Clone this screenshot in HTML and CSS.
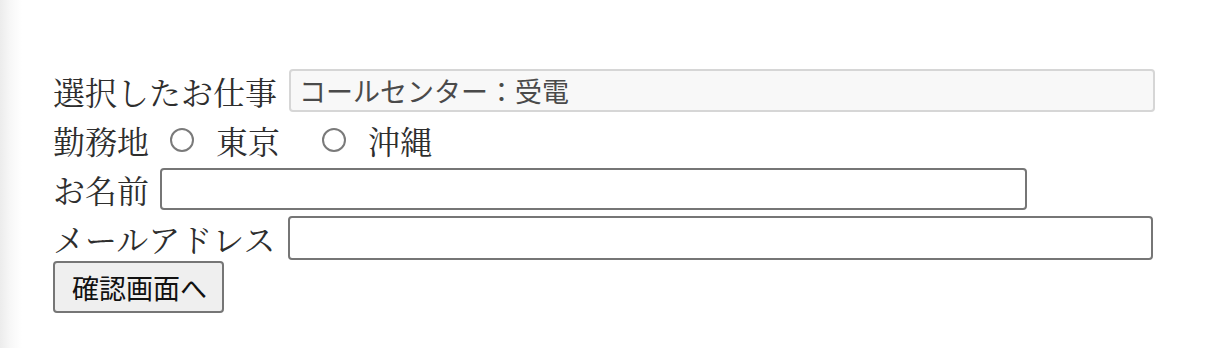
FILE: index.html
```html
<!DOCTYPE html>
<html lang="ja">
<head>
<meta charset="utf-8">
<link rel="stylesheet" href="styles.css">
</head>
<body>
<form class="form">
  <div class="row">
    <label class="label">選択したお仕事</label>
    <input class="field field-readonly field-wide" type="text" value="コールセンター：受電" readonly>
  </div>
  <div class="row">
    <span class="label">勤務地</span>
    <label class="choice"><input class="radio" type="radio" name="place"><span class="label">東京</span></label>
    <label class="choice"><input class="radio" type="radio" name="place"><span class="label">沖縄</span></label>
  </div>
  <div class="row">
    <label class="label">お名前</label>
    <input class="field field-name" type="text">
  </div>
  <div class="row">
    <label class="label">メールアドレス</label>
    <input class="field field-wide field-mail" type="text">
  </div>
  <div class="row-btn">
    <button class="btn" type="button">確認画面へ</button>
  </div>
</form>
</body>
</html>
```
FILE: styles.css
```css
html, body {
  margin: 0;
  padding: 0;
}
body {
  width: 1230px;
  height: 348px;
  background: linear-gradient(to right, #ececec 0px, #f7f7f7 10px, #ffffff 22px);
  overflow: hidden;
}
.form {
  padding: 66px 0 0 53px;
  font-family: "Noto Serif CJK JP", "IPAMincho", "Liberation Serif", "Noto Sans CJK JP", serif;
  font-size: 32px;
  color: #2e2e2e;
}
.row {
  display: flex;
  align-items: center;
  height: 49px;
}
.label {
  line-height: 1;
  white-space: nowrap;
}
.field {
  box-sizing: border-box;
  height: 43px;
  margin-left: 12px;
  padding: 0 8px;
  border: 2px solid #767676;
  border-radius: 4px;
  background: #fff;
  font-family: "Liberation Sans", "Noto Sans CJK JP", sans-serif;
  font-size: 27px;
  color: #333;
  outline: none;
}
.field-readonly {
  border-color: #d6d6d6;
  background: #f8f8f8;
  color: #4a4a4a;
}
.field-wide {
  width: 866px;
}
.field-mail {
  margin-left: 13px;
  width: 865px;
  height: 44px;
}
.field-name {
  margin-left: 11px;
  width: 867px;
  height: 42px;
}
.choice {
  display: flex;
  align-items: center;
}
.radio {
  appearance: none;
  -webkit-appearance: none;
  box-sizing: border-box;
  width: 24px;
  height: 24px;
  margin: 0 22px 0 21px;
  border: 2px solid #7a7a7a;
  border-radius: 50%;
  background: #fff;
}
.choice + .choice .radio {
  margin-left: 42px;
}
.row-btn {
  display: flex;
  margin-top: -1px;
}
.btn {
  box-sizing: border-box;
  width: 171px;
  height: 52px;
  margin: 0;
  padding: 0 10px 0 12px;
  border: 2px solid #767676;
  border-radius: 4px;
  background: #efefef;
  font-family: "Liberation Sans", "Noto Sans CJK JP", sans-serif;
  font-size: 27px;
  color: #111;
}
```
